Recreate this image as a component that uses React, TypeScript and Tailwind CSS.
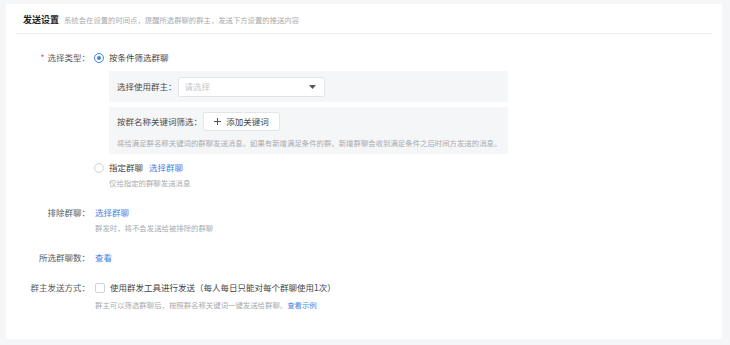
import React from 'react';

const FONT = "font-['Noto_Sans_CJK_SC','Noto_Sans',sans-serif]";

export default function App() {
  return (
    <div className={`w-[730px] h-[345px] bg-[#f5f6f8] pt-[4px] pl-[6px] pr-[8px] ${FONT}`}>
      <div className="bg-white h-[335px]">
        {/* Header */}
        <div className="mx-[10px] pt-[9px] pb-[6px] border-b border-[#eceef1] flex items-end pl-[7px]">
          <span className="text-[9px] leading-[14px] font-semibold text-[#222]">发送设置</span>
          <span className="ml-[5px] text-[7.35px] leading-[14px] text-[#a9abae]">
            系统会在设置的时间点，提醒所选群聊的群主，发送下方设置的推送内容
          </span>
        </div>

        {/* 选择类型 */}
        <FormRow
          className="mt-[16px]"
          label={
            <>
              <span className="text-[#f0494b] mr-[3px]">*</span>选择类型：
            </>
          }
        >
          <RadioItem checked label="按条件筛选群聊" />

          <div className="ml-[15px] w-[399px] mt-[6px] bg-[#f5f6f8] h-[31px] flex items-center pl-[8px]">
            <span className="text-[8.5px] text-[#4a4a4a] leading-[15px]">选择使用群主：</span>
            <div className="ml-[1px] w-[147px] h-[20px] bg-white border border-[#e3e5e9] rounded-[2px] flex items-center justify-between pl-[6px] pr-[8px]">
              <span className="text-[8.5px] text-[#c4c6ca]">请选择</span>
              <svg width="7" height="4" viewBox="0 0 7 4">
                <path d="M0 0h7L3.5 4z" fill="#555" />
              </svg>
            </div>
          </div>

          <div className="ml-[15px] w-[399px] mt-[5px] bg-[#f5f6f8] h-[47px] pl-[8px] pt-[5px]">
            <div className="flex items-center">
              <span className="text-[8.5px] text-[#4a4a4a] leading-[15px]">按群名称关键词筛选：</span>
              <div className="ml-[1px] w-[77px] h-[19px] bg-white border border-[#e3e5e9] rounded-[2px] flex items-center justify-center gap-[5px]">
                <svg width="7" height="7" viewBox="0 0 7 7">
                  <path d="M3.5 0v7M0 3.5h7" stroke="#444" strokeWidth="0.9" />
                </svg>
                <span className="text-[8.5px] text-[#444]">添加关键词</span>
              </div>
            </div>
            <div className="mt-[6px] text-[7.4px] leading-[12px] text-[#a9abae] whitespace-nowrap">
              将给满足群名称关键词的群聊发送消息。如果有新增满足条件的群，新增群聊会收到满足条件之后时间方发送的消息。
            </div>
          </div>

          <div className="mt-[6px]">
            <RadioItem
              label="指定群聊"
              extra={<span className="ml-[6px] text-[#3e84e6]">选择群聊</span>}
            />
          </div>
          <Hint className="ml-[15px] mt-[2px]">仅给指定的群聊发送消息</Hint>
        </FormRow>

        {/* 排除群聊 */}
        <FormRow className="mt-[16px]" label="排除群聊：">
          <span className="text-[8.5px] leading-[15px] text-[#3e84e6] pl-[1px]">选择群聊</span>
          <Hint className="mt-[2px] pl-[1px]">群发时，将不会发送给被排除的群聊</Hint>
        </FormRow>

        {/* 所选群聊数 */}
        <FormRow className="mt-[16px]" label="所选群聊数：">
          <span className="text-[8.5px] leading-[15px] text-[#3e84e6] pl-[1px]">查看</span>
        </FormRow>

        {/* 群主发送方式 */}
        <FormRow className="mt-[15px]" label="群主发送方式：">
          <div className="flex items-center h-[15px] pl-[1px]">
            <span className="w-[10px] h-[10px] border border-[#cfd2d6] rounded-[2px] bg-white" />
            <span className="ml-[5px] text-[8.5px] leading-[15px] text-[#444]">
              使用群发工具进行发送（每人每日只能对每个群聊使用1次）
            </span>
          </div>
          <Hint className="mt-[4px] pl-[1px]">
            群主可以筛选群聊后，按照群名称关键词一键发送给群聊。
            <span className="text-[#3e84e6]">查看示例</span>
          </Hint>
        </FormRow>
      </div>
    </div>
  );
}

interface FormRowProps {
  label: React.ReactNode;
  className?: string;
  children: React.ReactNode;
}

function FormRow({ label, className = '', children }: FormRowProps) {
  return (
    <div className={`flex ${className}`}>
      <div className="w-[84px] shrink-0 text-right text-[8.5px] leading-[15px] text-[#5a5a5a] whitespace-nowrap">
        {label}
      </div>
      <div className="ml-[4px] flex flex-col items-start">{children}</div>
    </div>
  );
}

interface RadioItemProps {
  label: string;
  checked?: boolean;
  extra?: React.ReactNode;
}

function RadioItem({ label, checked = false, extra }: RadioItemProps) {
  return (
    <div className="flex items-center h-[15px] text-[8.5px] leading-[15px]">
      <span
        className={`w-[10px] h-[10px] rounded-full border flex items-center justify-center bg-white ${
          checked ? 'border-[#3e84e6]' : 'border-[#cfd2d6]'
        }`}
      >
        {checked && <span className="w-[4px] h-[4px] rounded-full bg-[#3e84e6]" />}
      </span>
      <span className="ml-[5px] text-[#444]">{label}</span>
      {extra}
    </div>
  );
}

function Hint({ className = '', children }: { className?: string; children: React.ReactNode }) {
  return (
    <div className={`text-[7.4px] leading-[12px] text-[#a9abae] whitespace-nowrap ${className}`}>
      {children}
    </div>
  );
}
